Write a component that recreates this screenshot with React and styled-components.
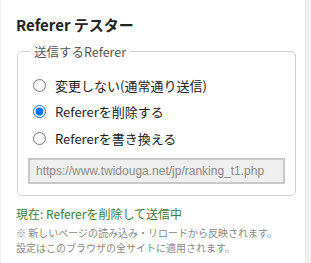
import React, { useState } from 'react'
import styled, { createGlobalStyle } from 'styled-components';

const GlobalStyle = createGlobalStyle`
  html, body {
    margin: 0;
    padding: 0;
    background-color: #f0f0f0;
  }
  body {
    font-family: "Noto Sans CJK JP", "Noto Sans", sans-serif;
  }
`;

const Panel = styled.div`
  margin-left: 1px;
  width: 304px;
  height: 263px;
  background-color: white;
  box-sizing: border-box;
  padding: 15px 11px 0 15px;
  display: flex;
  flex-direction: column;
`;

const Title = styled.h1`
  margin: 0;
  font-size: 15px;
  font-weight: bold;
  color: #222;
  line-height: 20px;
`;

const Fieldset = styled.fieldset`
  margin: 7px 0 0 1px;
  padding: 11px 10px 11px 10px;
  border: 1px solid #d0d0d0;
  border-radius: 5px;
  display: flex;
  flex-direction: column;
`;

const Legend = styled.legend`
  padding: 0 4px;
  margin-left: 2px;
  font-size: 12.5px;
  color: #555;
`;

const Option = styled.label`
  display: flex;
  align-items: center;
  height: 26.5px;
  font-size: 13px;
  color: #222;
  cursor: pointer;

  input {
    margin: 0 9px 0 5px;
    width: 13px;
    height: 13px;
    accent-color: #0075ff;
  }
`;

const UrlInput = styled.input`
  margin-top: 6px;
  height: 26px;
  box-sizing: border-box;
  border: 2px solid #c8c8c8;
  background-color: #efefef;
  color: #8a8a8a;
  font-family: "Liberation Sans", Arial, sans-serif;
  font-size: 12px;
  padding: 0 6px;
  width: 257px;
`;

const Status = styled.div`
  margin-top: 9px;
  font-size: 12px;
  color: #3a7d3a;
`;

const Note = styled.div`
  margin-top: 3px;
  font-size: 10px;
  line-height: 15.5px;
  color: #888;
`;

const options = [
  { value: 'keep', label: '変更しない(通常通り送信)' },
  { value: 'remove', label: 'Refererを削除する' },
  { value: 'replace', label: 'Refererを書き換える' },
];

export default function App() {
  const [mode, setMode] = useState('remove');

  return (
    <>
      <GlobalStyle />
      <Panel>
        <Title>Referer テスター</Title>
        <Fieldset>
          <Legend>送信するReferer</Legend>
          {options.map(o => (
            <Option key={o.value}>
              <input
                type="radio"
                name="mode"
                checked={mode === o.value}
                onChange={() => setMode(o.value)}
              />
              {o.label}
            </Option>
          ))}
          <UrlInput disabled value="https://www.twidouga.net/jp/ranking_t1.php" readOnly />
        </Fieldset>
        <Status>現在: Refererを削除して送信中</Status>
        <Note>
          ※ 新しいページの読み込み・リロードから反映されます。<br />
          設定はこのブラウザの全サイトに適用されます。
        </Note>
      </Panel>
    </>
  );
}
